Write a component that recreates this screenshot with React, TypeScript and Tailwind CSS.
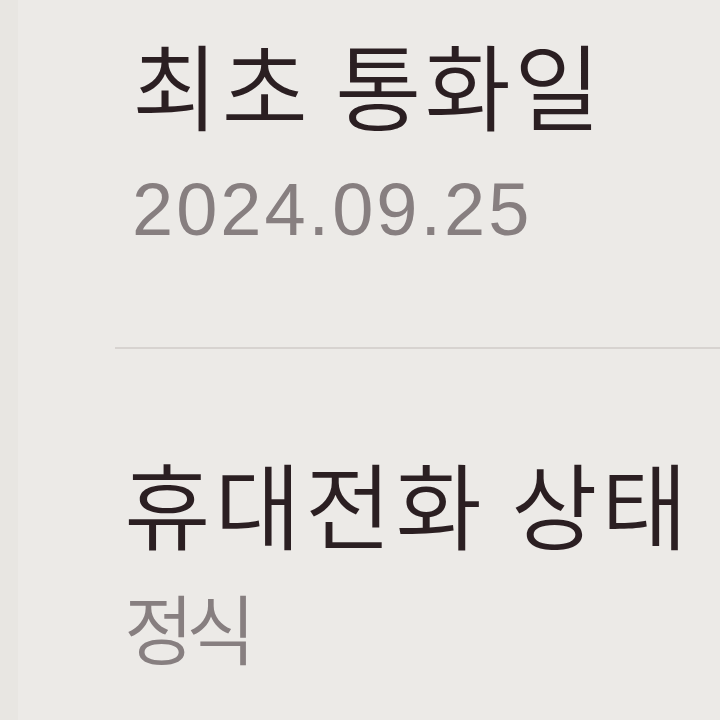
import React from 'react';

const kr = { fontFamily: '"Noto Sans CJK KR", "Noto Sans", sans-serif' };
const num = { fontFamily: '"Liberation Sans", Arial, sans-serif' };

export default function App() {
  return (
    <div className="w-[720px] h-[720px] overflow-hidden bg-[#eceae7] flex" style={kr}>
      <div className="w-[18px] bg-[#e8e6e2] flex-shrink-0" />
      <div className="flex-1 flex flex-col">
        {/* 최초 통화일 */}
        <div className="pl-[114px] pt-[36px]">
          <div className="text-[94px] leading-none font-[350] text-[#2b1f22] tracking-[3px]">최초 통화일</div>
          <div className="mt-[43px] text-[74px] leading-none text-[#877f80] tracking-[3px]" style={num}>
            2024.09.25
          </div>
        </div>
        <div className="ml-[97px] mt-[100px] h-[2px] bg-[#d7d3d0]" />
        {/* 휴대전화 상태 */}
        <div className="pl-[106px] pt-[106px]">
          <div className="text-[94px] leading-none font-[350] text-[#2b1f22] tracking-[4px]">휴대전화 상태</div>
          <div className="mt-[39px] text-[76px] leading-none font-[350] text-[#877f80] tracking-[-8px]">정식</div>
        </div>
      </div>
    </div>
  );
}
